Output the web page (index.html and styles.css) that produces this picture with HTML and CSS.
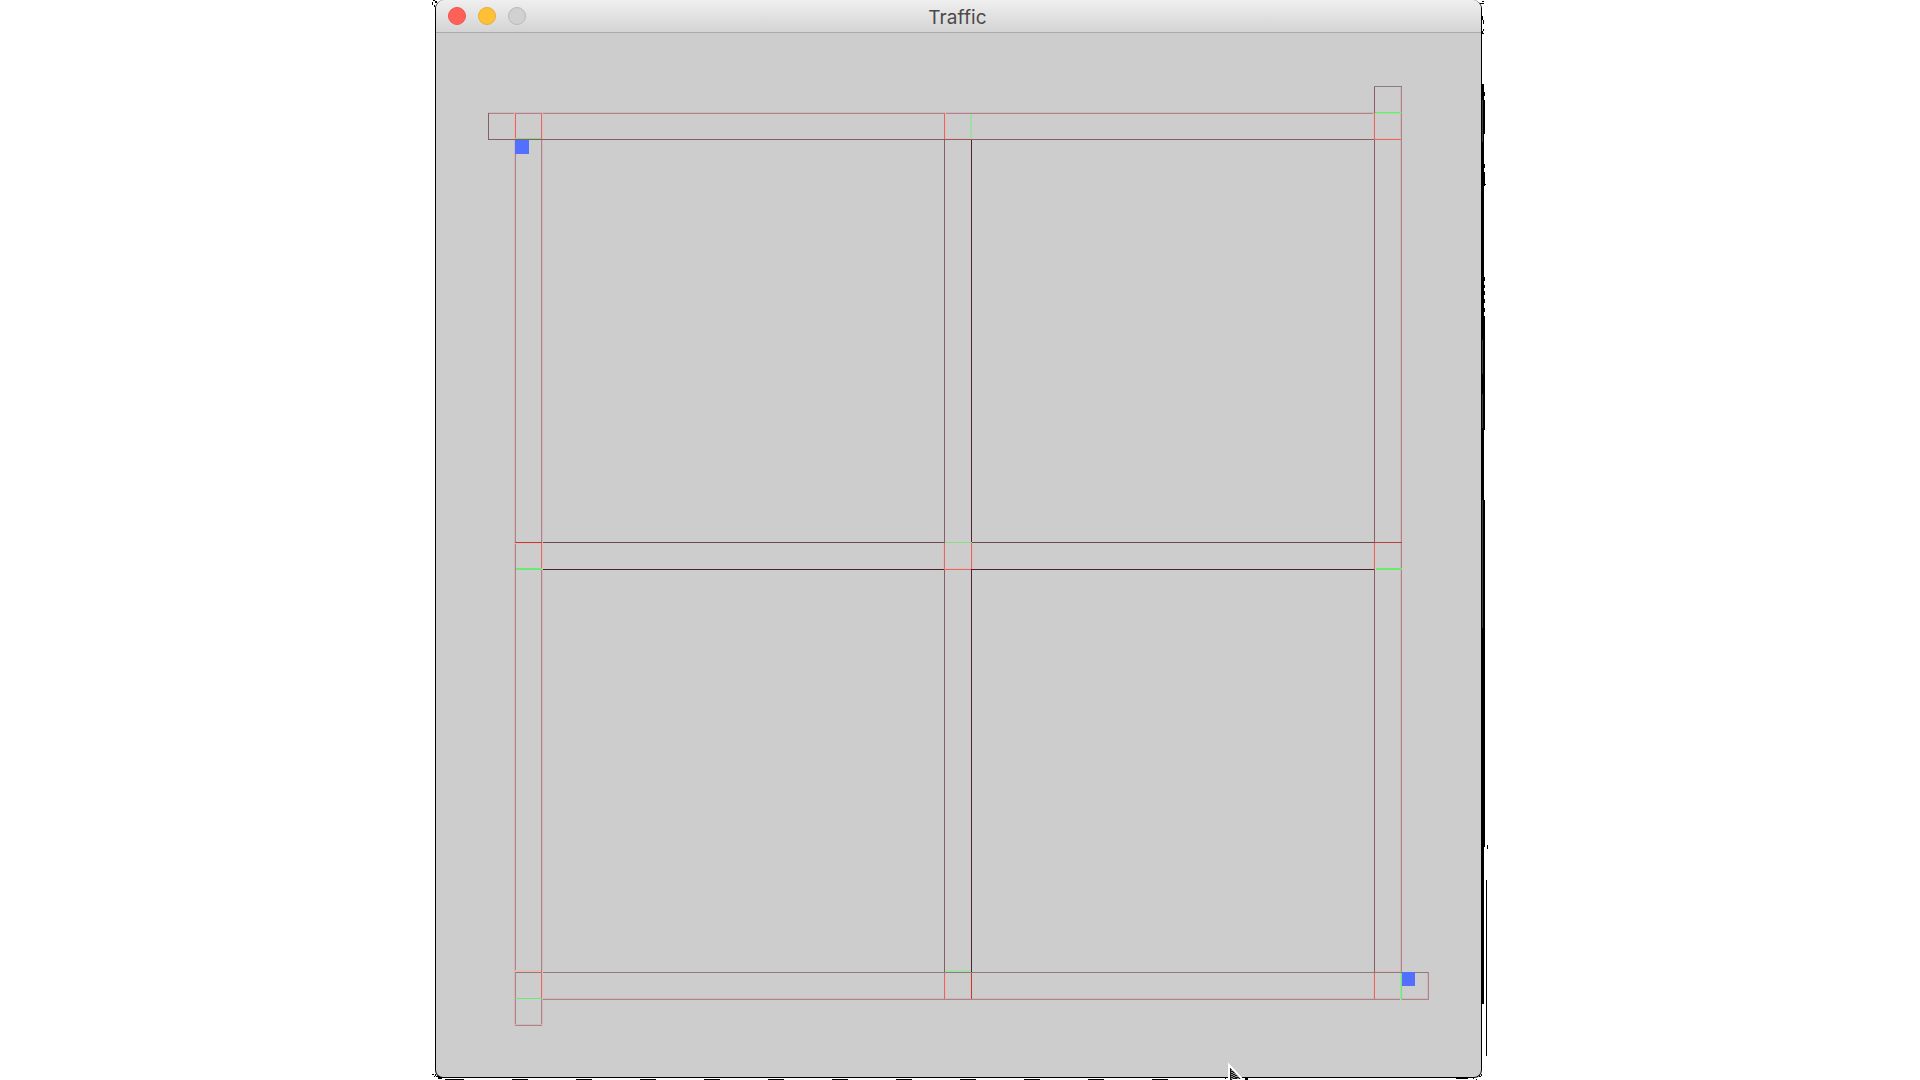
FILE: index.html
```html
<!DOCTYPE html>
<html lang="en">
<head>
<meta charset="utf-8">
<title>Traffic</title>
<link rel="stylesheet" href="styles.css">
</head>
<body>
<main class="window">
  <header class="titlebar">
    <div class="controls">
      <span class="dot close"></span>
      <span class="dot minimize"></span>
      <span class="dot disabled"></span>
    </div>
    <h1 class="title">Traffic</h1>
  </header>
  <svg class="roads" viewBox="436 33 1045 1044" shape-rendering="crispEdges">
    <!-- outer horizontal roads -->
    <path class="soft" d="M488 112.5H1374M542 998.5H1429"/>
    <path class="rose" d="M488 113.5H1374M542 999.5H1429"/>
    <path class="plum" d="M488 139.5H1374"/>
    <path class="gray" d="M515 972.5H1429"/>
    <!-- middle horizontal road -->
    <path class="plum dark" d="M542 542.5H944M971 542.5H1374"/>
    <path class="deep" d="M542 569.5H944M971 569.5H1374"/>
    <!-- outer vertical roads -->
    <path class="soft" d="M514.5 140V1025M542.5 140V1025M1400.5 86V972"/>
    <path class="rose" d="M515.5 140V1025M541.5 140V1025M1401.5 86V972"/>
    <path class="plum" d="M1374.5 86V972M488.5 113V140"/>
    <!-- middle vertical road -->
    <path class="plum" d="M944.5 140V972"/>
    <path class="deep" d="M971.5 140V972"/>
    <!-- road ends -->
    <path class="gray" d="M1374 86.5H1402"/>
    <path class="soft" d="M1427.5 973V999M515 1024.5H542"/>
    <path class="rose" d="M515 1025.5H542M1428.5 972V1000"/>
    <!-- intersection edges -->
    <path class="glow" d="M514.5 113V139M542.5 113V139M945.5 113V138M944 138.5H971M1373.5 113V139M1374 138.5H1401M542.5 543V569M515 543.5H541M1373.5 543V569M943.5 543V569M972.5 543V569M944 568.5H972M515 970.5H541M515 971.5H541M542.5 972V998M945.5 973V998M970.5 973V998M1375 971.5H1401M1373.5 973V998"/>
    <path class="red" d="M515.5 113V139M541.5 113V139M944.5 113V139M1374.5 113V139M1374 139.5H1401M541.5 543V569M1374.5 543V569M944.5 543V569M971.5 543V569M944 569.5H971M541.5 972V998M944.5 973V999M1374.5 973V999"/>
    <path class="crimson" d="M515 542.5H542M1374 542.5H1402M971.5 973V999"/>
    <!-- stop lines -->
    <path class="green-soft" d="M515 138.5H541M971.5 114V139M970.5 114V139M1375 113.5H1401M945 542.5H971M945 970.5H971M945 971.5H971M1400.5 973V1000"/>
    <path class="green" d="M1375 112.5H1402M516 568.5H542M516 569.5H542M1376 568.5H1402M1376 569.5H1402M515 998.5H542M1401.5 973V1000"/>
    <path class="green thin" d="M515 138.5H541M945 542.5H972"/>
    <!-- cars -->
    <rect class="car" x="515" y="140" width="14" height="14"/>
    <rect class="car" x="1402" y="972" width="13" height="14"/>
  </svg>
</main>
<svg class="overlay" viewBox="0 0 1920 1080">
  <!-- shadow remnants around the frame -->
  <g shape-rendering="crispEdges">
    <path class="ink" d="M1482 84h2v920h-2zM1484 92h1v4h-1zM1484 100h1v34h-1zM1484 164h1v4h-1zM1484 172h1v14h-1zM1485 184h1v1h-1zM1484 277h1v4h-1zM1484 285h1v3h-1zM1484 291h1v4h-1zM1484 299h1v4h-1zM1484 308h1v4h-1zM1484 316h1v114h-1zM1484 500h1v347h-1zM1487 845h1v4h-1zM1486 880h1v176h-1z"/>
    <path class="ink" d="M1482 1h2v1h-2zM1480 3h4v1h-4zM1482 16h1v4h-1zM1483 20h1v4h-1zM1483 29h1v2h-1zM1482 31h1v3h-1zM1483 33h1v1h-1zM432 2h1v3h-1zM433 0h2v1h-2zM434 5h1v2h-1zM435 1h2v2h-2zM433 1074h1v1h-1zM435 1074h1v2h-1zM436 1076h3v1h-3zM438 1077h4v2h-4zM432 1074h1v1h-1zM434 1076h1v1h-1z"/>
    <path class="ink" d="M445 1079h19v1h-19zM512 1079h16v1h-16zM576 1079h16v1h-16zM640 1079h16v1h-16zM704 1079h16v1h-16zM768 1079h16v1h-16zM832 1079h16v1h-16zM896 1079h16v1h-16zM960 1079h16v1h-16zM1024 1079h16v1h-16zM1088 1079h16v1h-16zM1152 1079h16v1h-16zM1456 1078h12v1h-12zM1473 1078h1v1h-1zM1476 1079h1v1h-1zM1479 1076h2v1h-2zM1481 1074h1v2h-1zM1245 1078h3v2h-3zM1225 1078h1v1h-1z"/>
    <path class="sheen" d="M1482 100h1v42h-1zM1482 340h1v34h-1zM1482 394h1v34h-1zM1482 500h1v128h-1z"/>
  </g>
  <path class="pointer" d="M1229 1065V1084L1233 1080H1243Z"/>
  <path class="speckle" d="M1232 1070v9M1234 1073v6M1236 1074v4M1238 1076v3"/>
</svg>
</body>
</html>
```
FILE: styles.css
```css
body {
  margin: 0;
  height: 1080px;
  overflow: hidden;
  background: #fff;
}

.window {
  box-sizing: border-box;
  width: 1047px;
  height: 1078px;
  margin-left: 435px;
  border: 1px solid #000;
  border-top: 0;
  border-radius: 9px 9px 8px 8px;
  overflow: hidden;
  background: #cdcdcd;
}

.titlebar {
  box-sizing: border-box;
  display: grid;
  grid-template-columns: 1fr auto 1fr;
  align-items: center;
  height: 33px;
  padding-left: 12px;
  padding-right: 14px;
  border-bottom: 1px solid #a9a9a9;
  background: linear-gradient(#efefef, #d4d4d4);
}

.controls {
  display: flex;
  gap: 12px;
}

.dot {
  box-sizing: border-box;
  width: 18px;
  height: 18px;
  border-radius: 50%;
}

.close { background: #ff6058; border: 1px solid #eb5650; }
.minimize { background: #ffc035; border: 1px solid #e5ad39; }
.disabled { background: #d1d1d0; border: 1px solid #b9b9b9; }

.title {
  margin: 0;
  padding-top: 4px;
  font: 400 19px/24px Inter, "Liberation Sans", sans-serif;
  letter-spacing: 0.1px;
  color: #4b4848;
}

.roads {
  display: block;
  width: 1045px;
  height: 1044px;
}

.roads path { fill: none; stroke-width: 1; }
.roads .soft { stroke: #d2b6ba; }
.roads .rose { stroke: #aa858a; }
.roads .plum { stroke: #895d66; }
.roads .dark { stroke: #6b4750; }
.roads .gray { stroke: #887c80; }
.roads .deep { stroke: #4e222c; }
.roads .glow { stroke: #e9b9b3; }
.roads .red { stroke: #d96c69; }
.roads .crimson { stroke: #b33f3f; }
.roads .green-soft { stroke: #a3dda3; }
.roads .green { stroke: #6bea6f; }
.roads .thin { stroke: #83e184; }
.car { fill: #526fff; }

.overlay {
  position: absolute;
  inset: 0;
  width: 1920px;
  height: 1080px;
}

.ink { fill: #000; }
.sheen { fill: #3d3b39; }
.pointer {
  fill: #161616;
  stroke: #fff;
  stroke-width: 2;
}
.speckle {
  fill: none;
  stroke: #fff;
  stroke-dasharray: 1 1;
}
```
